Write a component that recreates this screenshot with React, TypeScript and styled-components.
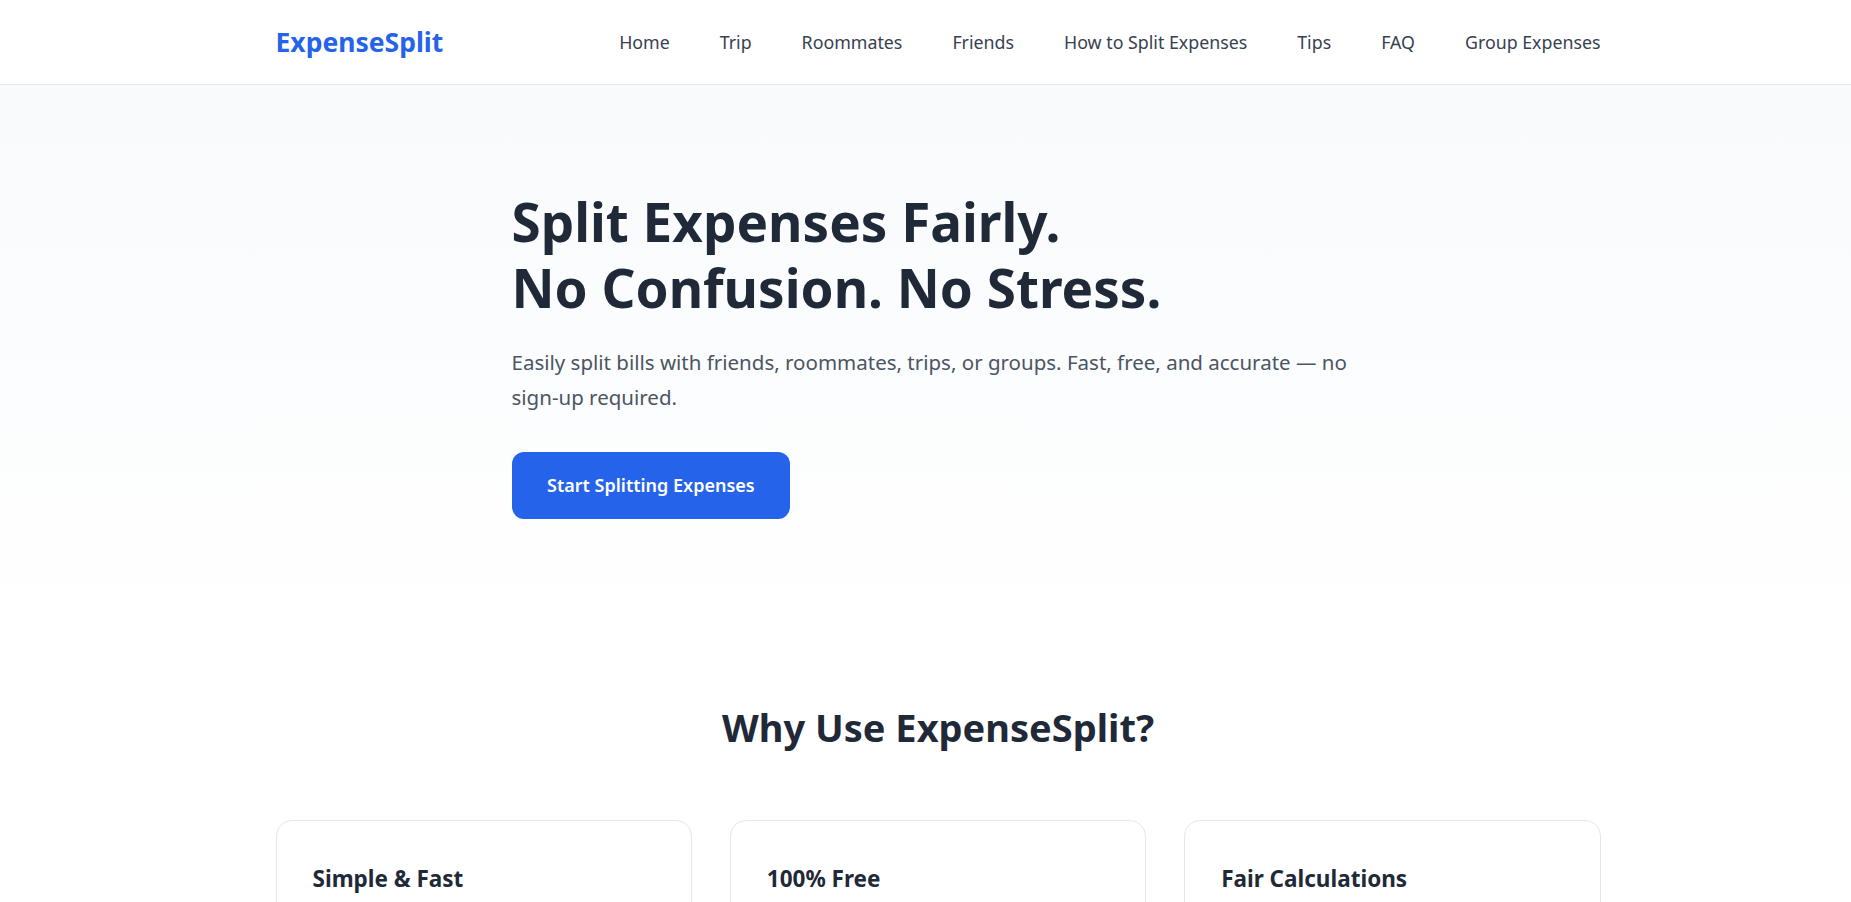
import React from "react";
import styled, { createGlobalStyle } from "styled-components";

const GlobalStyle = createGlobalStyle`
  * { box-sizing: border-box; }
  html, body { margin: 0; padding: 0; background: #ffffff; }
  body {
    font-family: "Noto Sans", "Open Sans", Arial, sans-serif;
    color: #1f2937;
    -webkit-font-smoothing: antialiased;
  }
`;

const Page = styled.div`
  min-height: 100vh;
  background: #ffffff;
`;

const Header = styled.header`
  height: 85px;
  background: #ffffff;
  border-bottom: 1px solid #e5e7eb;
`;

const Container = styled.div`
  width: 1325px;
  margin-left: calc(50% - 650px);
`;

const HeaderBar = styled(Container)`
  height: 100%;
  display: flex;
  align-items: center;
  justify-content: space-between;
`;

const Logo = styled.a`
  font-size: 26.5px;
  font-weight: 700;
  color: #2563eb;
  text-decoration: none;
`;

const Nav = styled.nav`
  display: flex;
  align-items: center;
  gap: 50px;
`;

const NavLink = styled.a`
  font-size: 17.8px;
  color: #374151;
  text-decoration: none;
`;

const Hero = styled.section`
  background: linear-gradient(180deg, #f8fafc 0%, #ffffff 100%);
  padding: 104px 0 120px;
`;

const HeroInner = styled.div`
  width: 850px;
  margin-left: calc(50% - 414px);
`;

const Title = styled.h1`
  margin: 0;
  font-size: 53px;
  line-height: 66px;
  font-weight: 700;
  color: #1f2937;
`;

const Lead = styled.p`
  margin: 24px 0 0;
  font-size: 20.5px;
  line-height: 35px;
  color: #4b5563;
`;

const PrimaryButton = styled.a`
  display: inline-block;
  margin-top: 37px;
  padding: 20px 35.5px;
  font-size: 18px;
  line-height: 27px;
  font-weight: 600;
  color: #ffffff;
  background: #2563eb;
  border-radius: 12px;
  text-decoration: none;
`;

const Features = styled.section`
  padding: 63px 0 60px;
`;

const SectionTitle = styled.h2`
  margin: 0 0 68px;
  text-align: center;
  font-size: 38px;
  line-height: 50px;
  font-weight: 700;
  color: #1f2937;
`;

const CardGrid = styled.div`
  display: grid;
  grid-template-columns: repeat(3, 1fr);
  gap: 38px;
`;

const Card = styled.article`
  background: #ffffff;
  border: 1px solid #e5e7eb;
  border-radius: 16px;
  padding: 43px 36px 40px;
`;

const CardTitle = styled.h3`
  margin: 0 0 12px;
  font-size: 22.5px;
  line-height: 30px;
  font-weight: 700;
  color: #1f2937;
`;

const CardText = styled.p`
  margin: 0;
  font-size: 16px;
  line-height: 26px;
  color: #4b5563;
`;

const navItems = [
  "Home",
  "Trip",
  "Roommates",
  "Friends",
  "How to Split Expenses",
  "Tips",
  "FAQ",
  "Group Expenses",
];

const features = [
  {
    title: "Simple & Fast",
    text: "Add people and expenses in seconds and see who owes whom instantly.",
  },
  {
    title: "100% Free",
    text: "No accounts, no subscriptions and no hidden fees — just open it and split.",
  },
  {
    title: "Fair Calculations",
    text: "Equal or custom shares, settled with the fewest possible payments.",
  },
];

export default function App() {
  return (
    <Page>
      <GlobalStyle />
      <Header>
        <HeaderBar>
          <Logo href="#">ExpenseSplit</Logo>
          <Nav>
            {navItems.map((item) => (
              <NavLink key={item} href="#">
                {item}
              </NavLink>
            ))}
          </Nav>
        </HeaderBar>
      </Header>

      <Hero>
        <HeroInner>
          <Title>
            Split Expenses Fairly.
            <br />
            No Confusion. No Stress.
          </Title>
          <Lead>
            Easily split bills with friends, roommates, trips, or groups. Fast,
            free, and accurate — no sign-up required.
          </Lead>
          <PrimaryButton href="#">Start Splitting Expenses</PrimaryButton>
        </HeroInner>
      </Hero>

      <Features>
        <Container>
          <SectionTitle>Why Use ExpenseSplit?</SectionTitle>
          <CardGrid>
            {features.map((f) => (
              <Card key={f.title}>
                <CardTitle>{f.title}</CardTitle>
                <CardText>{f.text}</CardText>
              </Card>
            ))}
          </CardGrid>
        </Container>
      </Features>
    </Page>
  );
}
